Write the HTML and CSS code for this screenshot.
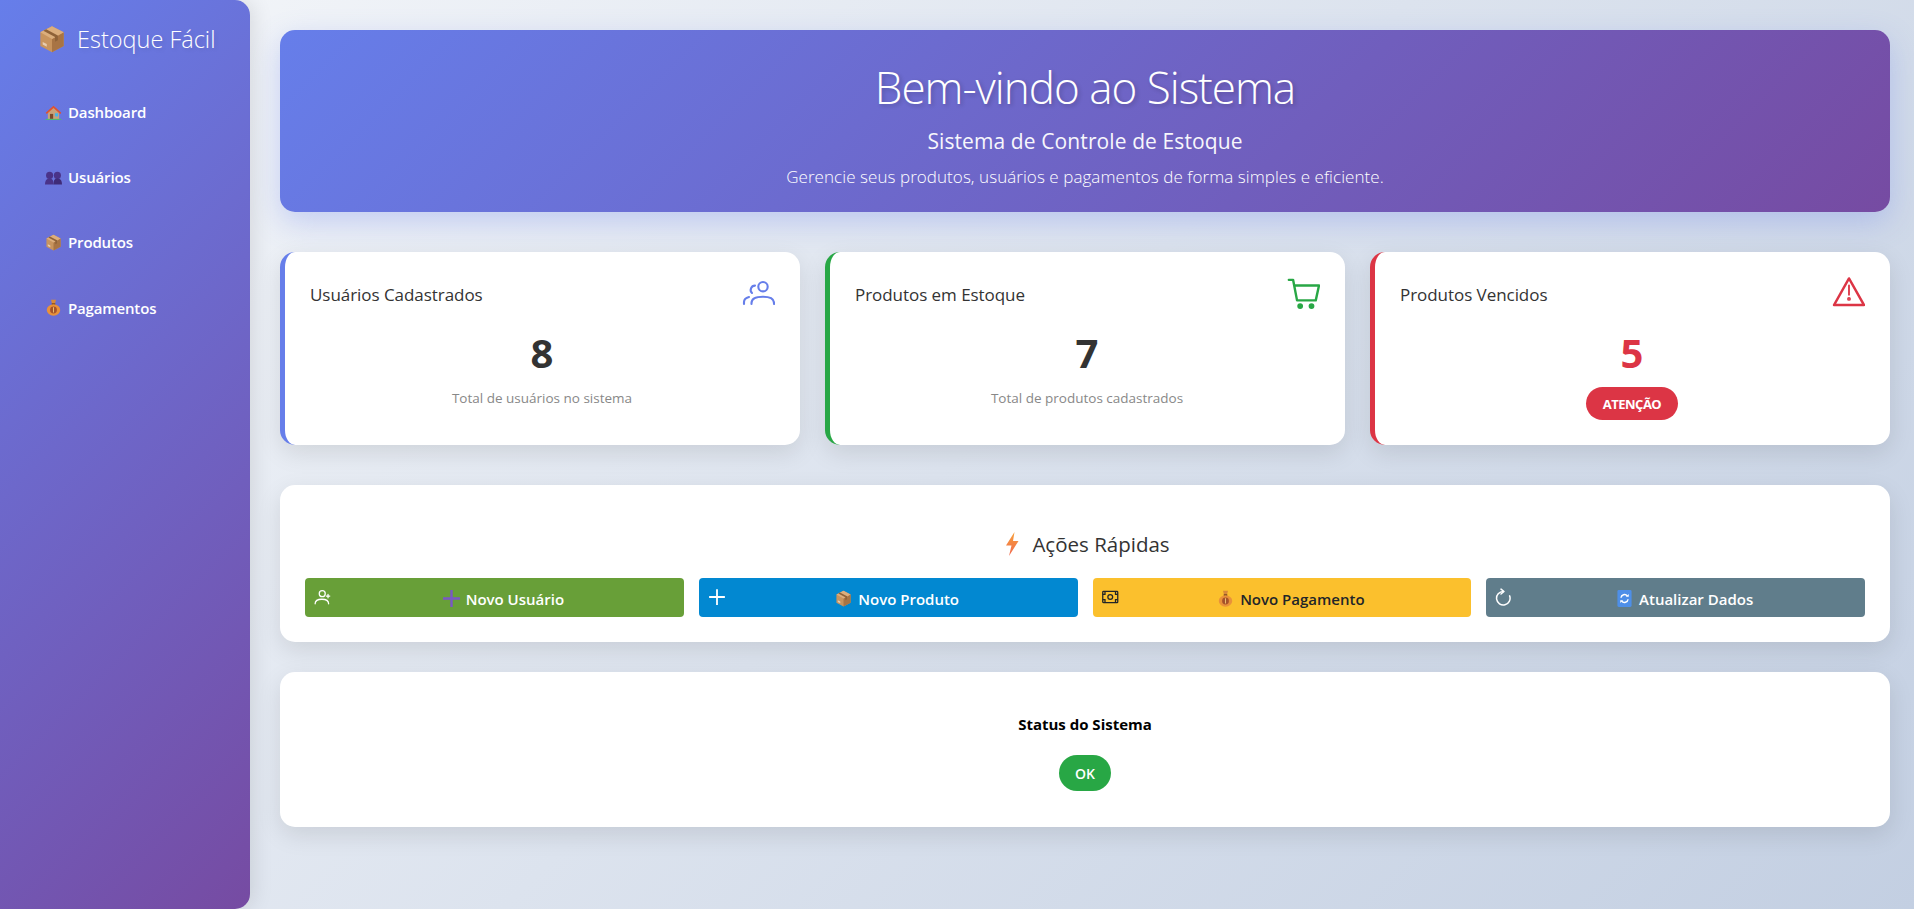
FILE: index.html
```html
<!DOCTYPE html>
<html lang="pt-BR">
<head>
<meta charset="utf-8">
<title>Estoque Fácil</title>
<link rel="stylesheet" href="styles.css">
</head>
<body>
<svg class="defs" width="0" height="0" aria-hidden="true">
  <defs>
    <linearGradient id="bolt-fill" x1="0" y1="0" x2="0" y2="1">
      <stop offset="0" stop-color="#f7a13a"/>
      <stop offset="1" stop-color="#f0684f"/>
    </linearGradient>
    <symbol id="e-box" viewBox="0 0 24 24">
      <path d="M12 1 22 6.200V18L12 23.300 2 18V6.200Z" fill="#c8945e"/>
      <path d="M12 12 22 6.200V18L12 23.300Z" fill="#a87444"/>
      <path d="M12 1 22 6.200 12 12 2 6.200Z" fill="#dcae7c"/>
      <path d="M7 3.600 17 8.900V13L14.600 14.400V10.300L4.600 4.900Z" fill="#8f6238"/>
      <path d="M4 14.500 7.500 16.300V18.600L4 16.800Z" fill="#e8cdb0"/>
    </symbol>
    <symbol id="e-home" viewBox="0 0 24 24">
      <path d="M4 11 12 4 20 11V21H4Z" fill="#c9a27a"/>
      <path d="M7 14H11.500V21H7Z" fill="#7b4a2c"/>
      <path d="M14 13H18.500V17.500H14Z" fill="#45b6e8"/>
      <path d="M1 12.500 12 2.500 23 12.500 21.500 14 12 5.500 2.500 14Z" fill="#e0512f"/>
      <path d="M1 21H23V22.500H1Z" fill="#4fbf6b"/>
    </symbol>
    <symbol id="e-people" viewBox="0 0 24 24">
      <circle cx="6.500" cy="9" r="5" fill="#4a3389"/>
      <circle cx="17.500" cy="9" r="5" fill="#4a3389"/>
      <path d="M0 22C0 15.500 3 13.500 6.500 13.500S12 15.500 12 22Z" fill="#4a3389"/>
      <path d="M12 22C12 15.500 14 13.500 17.500 13.500S24 15.500 24 22Z" fill="#3f2b78"/>
    </symbol>
    <symbol id="e-bag" viewBox="0 0 24 24">
      <path d="M8.500 1H15.500L14 7H10Z" fill="#d88a3a"/>
      <path d="M9.500 6H14.500V8.500H9.500Z" fill="#7d4a20"/>
      <ellipse cx="12" cy="15.500" rx="9.500" ry="8" fill="#e9913a"/>
      <circle cx="12" cy="15.500" r="4.800" fill="#a5522a"/>
      <path d="M11.400 11.800H12.600V19.200H11.400Z" fill="#f6d27a"/>
    </symbol>
    <symbol id="e-plus" viewBox="0 0 24 24">
      <path d="M10.300 0H13.700V10.300H24V13.700H13.700V24H10.300V13.700H0V10.300H10.300Z" fill="#7a57c6"/>
    </symbol>
    <symbol id="e-refresh" viewBox="0 0 24 24">
      <rect x="2" y="0" width="20" height="24" rx="2" fill="#4e8fe8"/>
      <path d="M7 11A5 5 0 0 1 16 8.500M17 13A5 5 0 0 1 8 15.500" fill="none" stroke="#fff" stroke-width="2"/>
      <path d="M14 9.500H18V5.500ZM10 14.500H6V18.500Z" fill="#fff"/>
    </symbol>
    <symbol id="e-bolt" viewBox="0 0 24 24">
      <path d="M14.500 0 6 13.500H11.500L9 24 18.500 9H13Z" fill="url(#bolt-fill)"/>
    </symbol>
  </defs>
</svg>

<div class="shell">
  <aside class="sidebar">
    <div class="brand">
      <svg class="brand-icon"><use href="#e-box"/></svg>
      <span>Estoque Fácil</span>
    </div>
    <nav class="nav">
      <a class="nav-link" href="#"><svg class="nav-icon"><use href="#e-home"/></svg>Dashboard</a>
      <a class="nav-link" href="#"><svg class="nav-icon"><use href="#e-people"/></svg>Usuários</a>
      <a class="nav-link" href="#"><svg class="nav-icon"><use href="#e-box"/></svg>Produtos</a>
      <a class="nav-link" href="#"><svg class="nav-icon"><use href="#e-bag"/></svg>Pagamentos</a>
    </nav>
  </aside>

  <main class="main">
    <header class="hero">
      <h1>Bem-vindo ao Sistema</h1>
      <p class="hero-sub">Sistema de Controle de Estoque</p>
      <p class="hero-text">Gerencie seus produtos, usuários e pagamentos de forma simples e eficiente.</p>
    </header>

    <section class="stats">
      <article class="stat stat-blue">
        <div class="stat-head">
          <h2>Usuários Cadastrados</h2>
          <svg class="stat-icon" viewBox="0 0 34 34" fill="none" stroke="currentColor" stroke-width="2.100" stroke-linecap="round" stroke-linejoin="round">
            <circle cx="22" cy="9.700" r="4.700"/>
            <path d="M10.500 27V26C10.500 22 15 19.700 22 19.700S33 22 33 26V27"/>
            <path d="M14 8.600A4.300 4.300 0 0 0 11 16"/>
            <path d="M3 27V25C3 22.500 5 20.800 8 20"/>
          </svg>
        </div>
        <div class="stat-value">8</div>
        <div class="stat-note">Total de usuários no sistema</div>
      </article>
      <article class="stat stat-green">
        <div class="stat-head">
          <h2>Produtos em Estoque</h2>
          <svg class="stat-icon" viewBox="0 0 24 24" fill="none" stroke="currentColor" stroke-width="1.700" stroke-linecap="round" stroke-linejoin="round">
            <path d="M2 2H5L7.800 16.500H21L23.300 6H5.800"/>
            <circle cx="10" cy="20.500" r="1.200" fill="currentColor"/>
            <circle cx="18" cy="20.500" r="1.200" fill="currentColor"/>
          </svg>
        </div>
        <div class="stat-value">7</div>
        <div class="stat-note">Total de produtos cadastrados</div>
      </article>
      <article class="stat stat-red">
        <div class="stat-head">
          <h2>Produtos Vencidos</h2>
          <svg class="stat-icon" viewBox="0 0 24 24" fill="none" stroke="currentColor" stroke-width="1.700" stroke-linejoin="round">
            <path d="M12.700 1 23.300 19.800H2.100Z"/>
            <path d="M12.700 6V12.500" stroke-linecap="round" stroke-width="1.300"/>
            <circle cx="12.700" cy="15.500" r="0.500" fill="currentColor"/>
          </svg>
        </div>
        <div class="stat-value">5</div>
        <span class="pill pill-red">ATENÇÃO</span>
      </article>
    </section>

    <section class="panel actions">
      <h3 class="actions-title"><svg class="bolt"><use href="#e-bolt"/></svg>Ações Rápidas</h3>
      <div class="action-grid">
        <a class="action action-green" href="#">
          <svg class="action-icon" viewBox="0 0 24 24" fill="none" stroke="currentColor" stroke-width="1.700" stroke-linecap="round">
            <circle cx="11" cy="7.600" r="4"/>
            <path d="M1.500 21C1.500 17 5 15 10.500 15S19.500 17 19.500 21"/>
            <path d="M18.700 8.500V13M16.500 10.700H21"/>
          </svg>
          <span class="action-label"><svg class="emoji"><use href="#e-plus"/></svg>Novo Usuário</span>
        </a>
        <a class="action action-blue" href="#">
          <svg class="action-icon" viewBox="0 0 24 24" fill="none" stroke="currentColor" stroke-width="2.400">
            <path d="M12 1.500V22.500M1.500 12H22.500"/>
          </svg>
          <span class="action-label"><svg class="emoji"><use href="#e-box"/></svg>Novo Produto</span>
        </a>
        <a class="action action-yellow" href="#">
          <svg class="action-icon" viewBox="0 0 24 24" fill="none" stroke="currentColor" stroke-width="1.700">
            <rect x="1" y="4.500" width="20" height="15" rx="1"/>
            <circle cx="11" cy="12" r="3.200"/>
            <path d="M1 8.500H4V4.500M18 4.500V8.500H21M1 15.500H4V19.500M18 19.500V15.500H21"/>
          </svg>
          <span class="action-label"><svg class="emoji"><use href="#e-bag"/></svg>Novo Pagamento</span>
        </a>
        <a class="action action-slate" href="#">
          <svg class="action-icon" viewBox="0 0 24 24" fill="none" stroke="currentColor" stroke-width="2" stroke-linecap="round" stroke-linejoin="round">
            <path d="M11 4.700A9 9 0 1 0 19.500 10.500"/>
            <path d="M8 1.500 12 4.700 8 8"/>
          </svg>
          <span class="action-label"><svg class="emoji"><use href="#e-refresh"/></svg>Atualizar Dados</span>
        </a>
      </div>
    </section>

    <section class="panel status">
      <h3 class="status-title">Status do Sistema</h3>
      <span class="pill pill-green">OK</span>
    </section>
  </main>
</div>
</body>
</html>
```
FILE: styles.css
```css
* { box-sizing: border-box; }
html, body { margin: 0; height: 100%; }
body {
  font-family: "Open Sans", "Noto Sans", sans-serif;
  background: linear-gradient(135deg, #f5f7fa 0%, #c3cfe2 100%);
  color: #2c2c2c;
  overflow: hidden;
}
.defs { position: absolute; }
.shell { display: flex; height: 909px; }

.sidebar {
  width: 250px;
  flex: none;
  padding: 19px 0 0 38px;
  background: linear-gradient(135deg, #667eea 0%, #764ba2 100%);
  border-radius: 0 15px 15px 0;
  box-shadow: 4px 0 20px rgba(0, 0, 0, .1);
  color: #fff;
}
.brand {
  display: flex;
  align-items: center;
  gap: 11px;
  height: 40px;
  margin-bottom: 38px;
  font-size: 23.500px;
  font-weight: 300;
  white-space: nowrap;
  text-shadow: 2px 2px 4px rgba(0, 0, 0, .1);
}
.brand-icon { width: 28px; height: 28px; flex: none; }
.nav { display: flex; flex-direction: column; gap: 35.200px; }
.nav-link {
  display: flex;
  align-items: center;
  gap: 6px;
  height: 30px;
  padding-left: 7px;
  color: #fff;
  font-size: 15px;
  font-weight: 600;
  letter-spacing: -.15px;
  text-decoration: none;
}
.nav-icon { width: 17px; height: 17px; flex: none; }

.main {
  flex: 1;
  min-width: 0;
  padding: 30px 24px 0 30px;
  display: flex;
  flex-direction: column;
}
.hero {
  height: 182px;
  margin-bottom: 40px;
  padding-top: 27px;
  text-align: center;
  color: #fff;
  background: linear-gradient(135deg, #667eea 0%, #764ba2 100%);
  border-radius: 15px;
  box-shadow: 0 10px 30px rgba(102, 126, 234, .3);
}
.hero h1 {
  margin: 0 0 10px;
  font-size: 44px;
  line-height: 60px;
  font-weight: 300;
  letter-spacing: -1px;
  text-shadow: 2px 2px 4px rgba(0, 0, 0, .2);
}
.hero-sub { margin: 0 0 10px; font-size: 21px; line-height: 28px; font-weight: 400; letter-spacing: .1px; opacity: .95; }
.hero-text { margin: 0; font-size: 17px; line-height: 23px; font-weight: 300; letter-spacing: .06px; }

.stats { display: grid; grid-template-columns: repeat(3, 1fr); gap: 25px; margin-bottom: 40px; }
.stat {
  height: 193px;
  padding: 24px 26px 0 25px;
  background: #fff;
  border-left: 5px solid;
  border-radius: 15px;
  box-shadow: 0 8px 25px rgba(0, 0, 0, .1);
  text-align: center;
}
.stat-blue { border-color: #667eea; }
.stat-green { border-color: #28a745; }
.stat-red { border-color: #dc3545; }
.stat-head { display: flex; justify-content: space-between; align-items: center; height: 36px; margin-bottom: 14px; text-align: left; }
.stat-head h2 { margin: 0; font-size: 17px; font-weight: 500; letter-spacing: -.05px; color: #333; }
.stat-icon { width: 34px; height: 34px; margin-right: -1px; flex: none; }
.stat-blue .stat-icon { color: #667eea; }
.stat-green .stat-icon { color: #28a745; }
.stat-red .stat-icon { color: #dc3545; }
.stat-value { font-size: 40px; line-height: 54px; font-weight: 700; color: #333; }
.stat-red .stat-value { color: #dc3545; }
.stat-note { margin-top: 9px; font-size: 13.500px; line-height: 18px; color: #888; }

.pill {
  display: inline-flex;
  align-items: center;
  justify-content: center;
  color: #fff;
  font-weight: 600;
  border-radius: 20px;
}
.pill-red { width: 92px; height: 33px; margin-top: 7px; font-size: 13px; font-weight: 700; letter-spacing: -.5px; background: #dc3545; }
.pill-green { width: 52px; height: 36px; font-size: 14px; background: #28a745; }

.panel {
  background: #fff;
  border-radius: 15px;
  box-shadow: 0 8px 25px rgba(0, 0, 0, .1);
}
.actions { height: 157px; padding: 44px 25px 0; margin-bottom: 30px; }
.actions-title {
  display: flex;
  align-items: center;
  justify-content: center;
  gap: 8px;
  height: 30px;
  margin: 0 0 19px;
  font-size: 20.500px;
  font-weight: 500;
  color: #333;
}
.bolt { width: 24px; height: 24px; }
.action-grid { display: grid; grid-template-columns: repeat(4, 1fr); gap: 15px; }
.action {
  position: relative;
  display: flex;
  align-items: center;
  justify-content: center;
  height: 39px;
  padding-left: 18px;
  border-radius: 4px;
  color: #fff;
  font-size: 15px;
  font-weight: 600;
  text-decoration: none;
}
.action-green { background: #689f38; }
.action-blue { background: #0288d1; }
.action-yellow { background: #fbc02d; color: #212529; }
.action-slate { background: #607d8b; }
.action-icon { position: absolute; left: 9px; top: 10px; width: 18px; height: 18px; }
.action-label { display: flex; align-items: center; gap: 6px; padding-top: 2px; }
.emoji { width: 17px; height: 17px; flex: none; }

.status { height: 155px; padding-top: 41px; text-align: center; }
.status-title { margin: 0 0 20px; font-size: 15px; line-height: 22px; font-weight: 700; color: #000; }
```
